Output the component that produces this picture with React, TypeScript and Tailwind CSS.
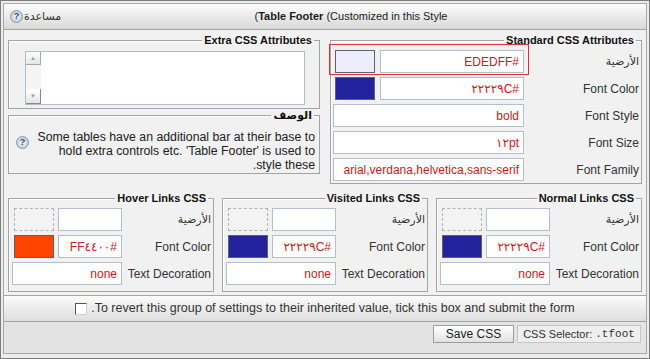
import type { ReactNode } from 'react'

function HelpIcon() {
  return (
    <span className="inline-flex w-[13px] h-[13px] shrink-0 items-center justify-center rounded-full border border-[#8598b0] bg-radial from-[#ffffff] to-[#a9b9cc] text-[9px] leading-none font-bold text-[#2a4670]">
      ?
    </span>
  )
}

function Box({ title, children }: { title: string; children: ReactNode }) {
  return (
    <fieldset className="min-w-0 border border-[#a3a3a3] shadow-[inset_1px_1px_0_#ffffff]">
      <legend className="mr-[5px] px-[2px] text-[11px] leading-[13px] font-bold text-[#111]">{title}</legend>
      {children}
    </fieldset>
  )
}

function Field({ value, className = '' }: { value?: string; className?: string }) {
  return (
    <div
      dir="ltr"
      className={`h-[23px] flex items-center justify-end pr-[4px] bg-white border border-[#b4bfcc] text-[#cc1a1a] whitespace-nowrap overflow-hidden ${className}`}
    >
      {value}
    </div>
  )
}

function Swatch({ color }: { color?: string }) {
  if (!color) {
    return <div className="w-[40px] h-[23px] shrink-0 border border-dashed border-[#b3b3b3] bg-[#f3f3f3]" />
  }
  return <div className="w-[40px] h-[23px] shrink-0 border border-[#5f5f6f]" style={{ backgroundColor: color }} />
}

function LinkBox({ title, color, value }: { title: string; color: string; value: string }) {
  return (
    <Box title={title}>
      <div className="flex flex-col gap-[4px] pt-[3px] pb-[6px]">
        <div className="flex items-center h-[23px]">
          <div className="w-[91px] shrink-0 pr-[2px] text-[11px] text-[#333]">الأرضية</div>
          <div className="flex-1 flex gap-[4px]">
            <Field className="w-[64px] shrink-0" />
            <Swatch />
          </div>
        </div>
        <div className="flex items-center h-[23px]">
          <div className="w-[91px] shrink-0 pr-[2px] text-[#333]">Font Color</div>
          <div className="flex-1 flex gap-[4px]">
            <Field className="w-[64px] shrink-0 text-[#b30000]" value={value} />
            <Swatch color={color} />
          </div>
        </div>
        <div className="flex items-center h-[23px]">
          <div className="w-[91px] shrink-0 pr-[2px] text-[#333] whitespace-nowrap">Text Decoration</div>
          <div className="flex-1 pl-[3px]">
            <Field className="text-[#b30000]" value="none" />
          </div>
        </div>
      </div>
    </Box>
  )
}

export default function App() {
  return (
    <div
      dir="rtl"
      className="w-[650px] h-[359px] bg-[#ececec] border border-[#7d7d7d] px-[2px] pt-[2px] pb-[4px] text-[12px] text-[#333] font-[family-name:'Liberation_Sans','DejaVu_Sans',sans-serif]"
    >
      <div className="h-full flex flex-col border border-[#a8a8a8] bg-[#f1f1f1]">
        {/* header */}
        <div className="h-[26px] shrink-0 flex items-center border-b border-[#a5a5a5] bg-gradient-to-b from-[#fdfdfd] to-[#d8d8d8]">
          <div dir="ltr" className="flex-1 text-center text-[11px] text-[#1c1c1c]">
            (<b>Table Footer</b> (Customized in this Style
          </div>
          <a dir="ltr" className="w-[52px] flex items-center gap-[1px] pl-[6px] text-[11px] text-[#333]">
            <HelpIcon />
            <span>مساعدة</span>
          </a>
        </div>

        {/* settings */}
        <div className="px-[4px] pt-[4px] pb-[3px]">
          <div className="grid grid-cols-2 gap-x-[10px]">
            <Box title="Standard CSS Attributes">
              <div className="flex flex-col gap-[4px] pt-[3px] pb-[2px]">
                <div className="flex items-center h-[23px]">
                  <div className="w-[117px] shrink-0 pr-[2px] text-[11px]">الأرضية</div>
                  <div className="relative flex-1 flex gap-[5px] pl-[2px]">
                    <Field className="w-[144px] shrink-0" value="EDEDFF#" />
                    <Swatch color="#ededff" />
                    <div className="absolute -left-[2px] -right-[5px] -top-[6px] -bottom-[2px] border border-[#e03434] pointer-events-none" />
                  </div>
                </div>
                <div className="flex items-center h-[23px]">
                  <div className="w-[117px] shrink-0 pr-[2px]">Font Color</div>
                  <div className="flex-1 flex gap-[5px] pl-[2px]">
                    <Field className="w-[144px] shrink-0" value="٢٢٢٢٩C#" />
                    <Swatch color="#22229c" />
                  </div>
                </div>
                <div className="flex items-center h-[23px]">
                  <div className="w-[117px] shrink-0 pr-[2px]">Font Style</div>
                  <div className="flex-1 pl-[2px]">
                    <Field value="bold" />
                  </div>
                </div>
                <div className="flex items-center h-[23px]">
                  <div className="w-[117px] shrink-0 pr-[2px]">Font Size</div>
                  <div className="flex-1 pl-[2px]">
                    <Field value="١٢pt" />
                  </div>
                </div>
                <div className="flex items-center h-[23px]">
                  <div className="w-[117px] shrink-0 pr-[2px]">Font Family</div>
                  <div className="flex-1 pl-[2px]">
                    <Field value="arial,verdana,helvetica,sans-serif" />
                  </div>
                </div>
              </div>
            </Box>

            <div className="flex flex-col">
              <Box title="Extra CSS Attributes">
                <div className="pt-[4px] pb-[3px] pl-[16px] pr-[14px]">
                  <div dir="ltr" className="h-[54px] flex border border-[#aebccb] bg-white">
                    <div className="w-[15px] flex flex-col justify-between bg-[#f4f4f4]">
                      <div className="h-[13px] flex items-center justify-center border-r border-b border-[#a8a8a8] bg-gradient-to-b from-[#ffffff] to-[#e6e6e6] text-[6px] text-[#a0a0a0]">▲</div>
                      <div className="h-[15px] flex items-center justify-center border-r border-b border-[#8a8a8a] bg-gradient-to-b from-[#ffffff] to-[#e6e6e6] text-[6px] text-[#a0a0a0]">▼</div>
                    </div>
                    <div className="flex-1" />
                  </div>
                </div>
              </Box>
              <Box title="الوصف">
                <div className="flex items-start pt-[8px] pb-[1px] pr-[4px] pl-[7px]">
                  <div className="flex-1 leading-[14px] text-[12.3px] text-[#222] whitespace-nowrap">
                    <div className="text-right">Some tables have an additional bar at their base to</div>
                    <div className="text-right">hold extra controls etc. 'Table Footer' is used to</div>
                    <div className="text-right">style these.</div>
                  </div>
                  <div className="mt-[2px]">
                    <HelpIcon />
                  </div>
                </div>
              </Box>
            </div>
          </div>

          <div className="grid grid-cols-3 gap-x-[8px] mt-[8px]">
            <LinkBox title="Normal Links CSS" color="#22229c" value="٢٢٢٢٩C#" />
            <LinkBox title="Visited Links CSS" color="#22229c" value="٢٢٢٢٩C#" />
            <LinkBox title="Hover Links CSS" color="#ff4400" value="FF٤٤٠٠#" />
          </div>
        </div>

        {/* revert */}
        <div dir="ltr" className="h-[26px] shrink-0 flex items-center justify-center border-t border-[#a5a5a5] bg-gradient-to-b from-[#fbfbfb] to-[#dedede]">
          <input
            type="checkbox"
            className="appearance-none w-[12px] h-[12px] mr-[4px] bg-white border border-t-[#555] border-l-[#555] border-r-[#d0d0d0] border-b-[#d0d0d0]"
          />
          <span dir="rtl" className="text-[12.5px] text-[#333]">
            To revert this group of settings to their inherited value, tick this box and submit the form.
          </span>
        </div>

        {/* actions */}
        <div className="flex-1 flex items-start gap-[3px] pt-[3px] pr-[5px] border-t border-[#a3a3a3] bg-[#e3e3e3]">
          <div dir="ltr" className="w-[124px] h-[18px] flex items-center justify-center border border-[#c6c6c6] bg-[#eeeeee] text-[11px] text-[#333] whitespace-nowrap">
            CSS Selector:&nbsp;<span className="font-[family-name:'Liberation_Mono',monospace]">.tfoot</span>
          </div>
          <button className="w-[81px] h-[18px] border border-[#9c9c9c] bg-gradient-to-b from-[#ffffff] to-[#e2e2e2] text-[#222] text-[12px] leading-none">
            Save CSS
          </button>
        </div>
      </div>
    </div>
  )
}
